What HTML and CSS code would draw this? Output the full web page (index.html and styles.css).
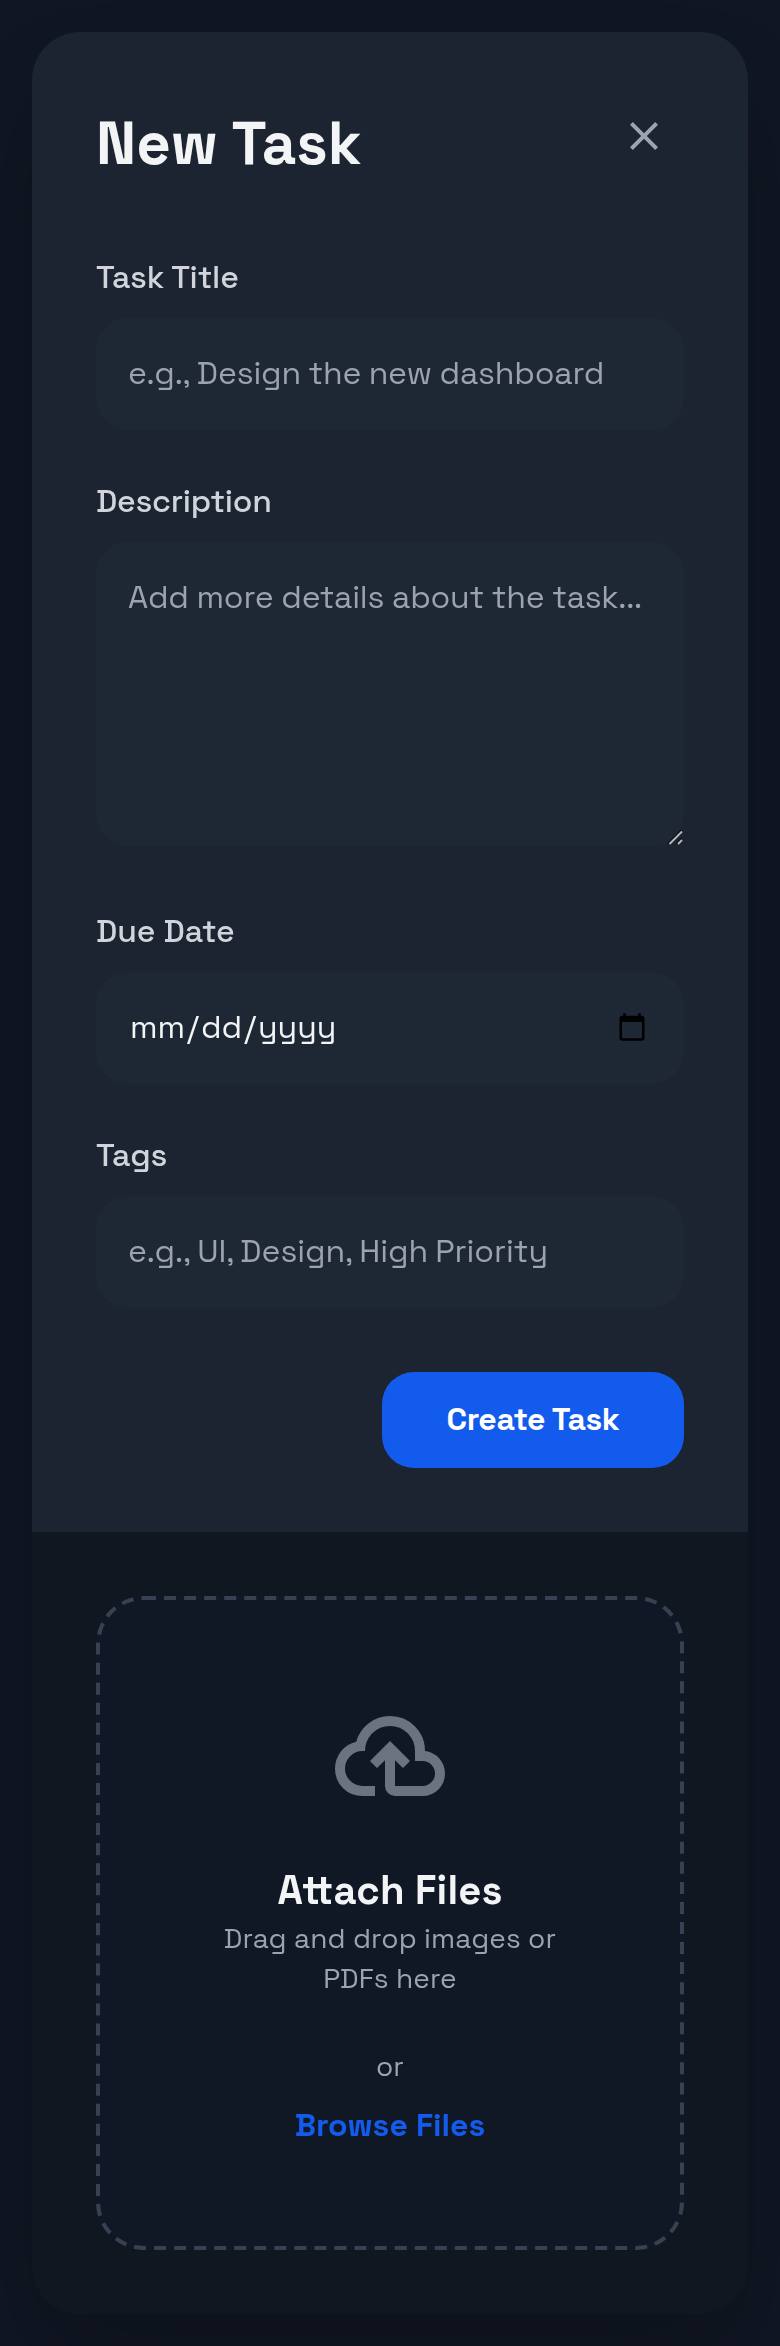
FILE: index.html
```html
<!DOCTYPE html>
<html lang="en">
<head>
<meta charset="utf-8">
<title>New Task</title>
<link rel="stylesheet" href="styles.css">
</head>
<body>
<div class="screen">
<main class="card">
  <form class="task-form">
    <header class="form-header">
      <h1 class="title">New Task</h1>
      <button class="close" type="button" aria-label="Close">
        <svg width="24" height="24" viewBox="0 0 24 24" fill="currentColor"><path d="M6.400 19 5 17.600 10.600 12 5 6.400 6.400 5 12 10.600 17.600 5 19 6.400 13.400 12 19 17.600 17.600 19 12 13.400z"/></svg>
      </button>
    </header>
    <div class="field">
      <label class="label label-title" for="t">Task Title</label>
      <input class="control text" id="t" type="text" placeholder="e.g., Design the new dashboard">
    </div>
    <div class="field">
      <label class="label label-desc" for="d">Description</label>
      <div class="area-wrap">
        <textarea class="control area" id="d" placeholder="Add more details about the task..."></textarea>
        <svg class="grip" width="7.500" height="7.500" viewBox="0 0 15 15" fill="none"><path d="M0 13.500 13.500 0M8.500 13.500l5-5" stroke="#080b10" stroke-width="1.500"/><path d="M1.500 14 14 1.500M10 14l4-4" stroke="#b4b6b8" stroke-width="2"/></svg>
      </div>
    </div>
    <div class="field">
      <label class="label label-date" for="u">Due Date</label>
      <input class="control date" id="u" type="date">
    </div>
    <div class="field">
      <label class="label" for="g">Tags</label>
      <input class="control text tags" id="g" type="text" placeholder="e.g., UI, Design, High Priority">
    </div>
    <div class="actions"><button class="create" type="button">Create Task</button></div>
  </form>
  <section class="attach">
    <div class="dropzone">
      <svg class="cloud" width="60" height="60" viewBox="0 0 24 24" fill="currentColor"><path d="M9 20H6.500q-2.280 0-3.890-1.570Q1 16.850 1 14.580q0-1.950 1.170-3.480 1.180-1.530 3.080-1.950.63-2.300 2.500-3.720Q9.630 4 12 4q2.930 0 4.960 2.040Q19 8.070 19 11q1.730.2 2.860 1.500Q23 13.780 23 15.500q0 1.880-1.310 3.190T18.500 20H13q-.82 0-1.410-.59Q11 18.830 11 18v-5.150L9.400 14.400 8 13l4-4 4 4-1.400 1.400-1.600-1.550V18h5.500q1.050 0 1.770-.73.73-.72.73-1.770t-.73-1.770Q19.550 13 18.500 13H17v-2q0-2.080-1.460-3.540Q14.080 6 12 6 9.930 6 8.460 7.460 7 8.930 7 11h-.5q-1.450 0-2.470 1.030Q3 13.050 3 14.500t1.030 2.470Q5.050 18 6.500 18H9z"/></svg>
      <h2 class="attach-title">Attach Files</h2>
      <p class="hint">Drag and drop images or PDFs here</p>
      <p class="or">or</p>
      <button class="browse" type="button">Browse Files</button>
    </div>
  </section>
</main>
</div>
</body>
</html>
```
FILE: styles.css
```css
* { box-sizing: border-box; margin: 0; padding: 0; }
body { width: 780px; height: 2346px; overflow: hidden; background: #101622; font-family: "Space Grotesk", Inter, "Liberation Sans", sans-serif; }
button, input, textarea { font: inherit; border: 0; background: none; outline: 0; }
/* Mobile layout, drawn at double size */
.screen { width: 390px; height: 1173px; padding: 16px; transform: scale(2); transform-origin: 0 0; }
.card { border-radius: 24px; overflow: hidden; background: #101720; box-shadow: 0 25px 50px -12px rgba(0, 0, 0, .25); }
.task-form { height: 750px; padding: 32px; background: #1d2431; display: flex; flex-direction: column; }
.form-header { height: 79px; display: flex; justify-content: space-between; align-items: flex-start; }
.title { font-size: 30px; line-height: 48px; font-weight: 700; color: #f3f4f6; letter-spacing: .04px; }
.close { padding: 8px; color: #9ca3af; line-height: 0; }
.field { display: flex; flex-direction: column; margin-bottom: 24px; }
.label { font-size: 16px; line-height: 24px; height: 32px; font-weight: 500; color: #d1d5db; white-space: nowrap; }
.label-title { letter-spacing: -.08px; }
.label-desc { letter-spacing: -.13px; }
.label-date { letter-spacing: -.04px; }
.control { display: block; width: 100%; height: 56px; padding: 0 16px; border-radius: 16px; background: #1d2834; color: #f3f4f6; font-size: 16px; line-height: 24px; }
.control::placeholder { color: #9ca3af; opacity: 1; }
.text { padding-bottom: 2px; letter-spacing: -.08px; word-spacing: -.3px; }
.tags { letter-spacing: -.02px; word-spacing: -.5px; }
.area-wrap { position: relative; height: 159px; }
.area { height: 152px; padding: 16px 0 16px 16px; resize: none; overflow: hidden; letter-spacing: -.125px; }
.grip { position: absolute; right: .5px; bottom: 7.5px; }
.actions { display: flex; justify-content: flex-end; padding-top: 8px; }
.create { width: 151px; height: 48px; padding-bottom: 2px; border-radius: 16px; background: #135bec; color: #fff; font-size: 16px; font-weight: 700; letter-spacing: -.2px; }
.attach { height: 391px; padding: 32px; }
.dropzone { height: 327px; border: 2px dashed #374151; border-radius: 24px; background: #111825; display: flex; flex-direction: column; align-items: center; padding: 48px 48px 0; text-align: center; }
.cloud { color: #6b7280; flex: none; }
.attach-title { margin-top: 23px; font-size: 20px; line-height: 28px; font-weight: 700; color: #f3f4f6; letter-spacing: .08px; }
.hint { font-size: 14px; line-height: 20px; color: #9ca3af; letter-spacing: .06px; }
.or { margin-top: 24px; font-size: 14px; line-height: 20px; color: #9ca3af; }
.browse { margin-top: 7.5px; font-size: 16px; line-height: 24px; font-weight: 700; color: #135bec; }
```
